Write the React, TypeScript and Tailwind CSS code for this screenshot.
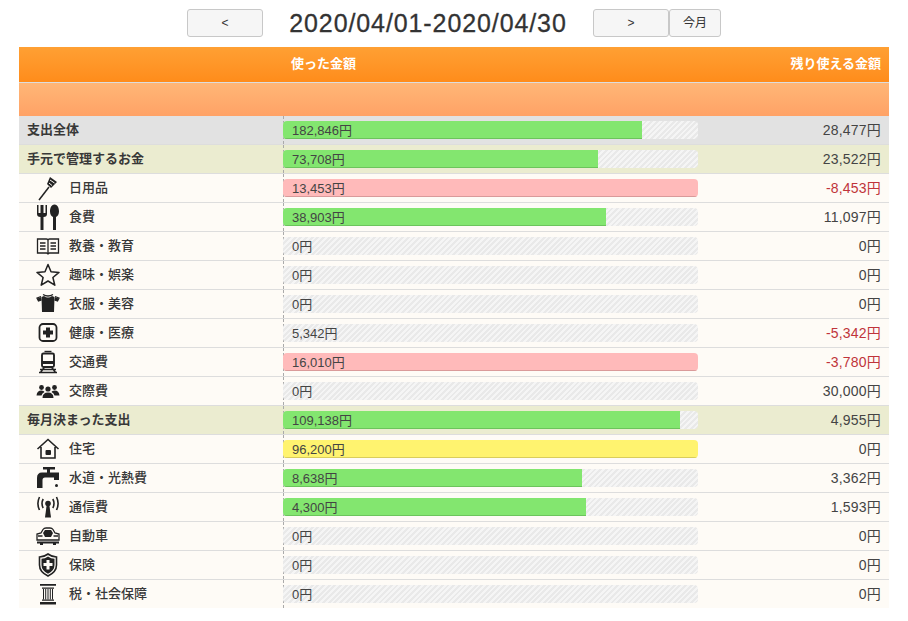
import React from "react";

type Row = {
  label: string;
  kind: "total" | "group" | "item";
  fill: number;
  color?: "green" | "pink" | "yellow";
  spent: string;
  left: string;
  red?: boolean;
  icon?: keyof typeof icons;
};

const icons = {
  brush: (
    <>
      <path d="M3 25 L13 12" stroke="currentColor" strokeWidth="1.500" fill="none" />
      <path d="M11 9 L14 2 L21 7 L15 13 Z" fill="currentColor" />
      <path d="M14 5 L18.500 8 M13 8 L16 10.500" stroke="#fefbf6" strokeWidth="1" fill="none" />
    </>
  ),
  food: (
    <>
      <path d="M1 1 V10 Q1 13 4.500 13 V26 H7.500 V13 Q11 13 11 10 V1 H9.500 V9 H7.500 V1 H4.500 V9 H2.500 V1 Z" fill="currentColor" />
      <path d="M18.500 0.500 C15 0.500 14 4.500 14 7.500 C14 10.500 15.500 12.500 17 13 V26 H20 V13 C21.500 12.500 23 10.500 23 7.500 C23 4.500 22 0.500 18.500 0.500 Z" fill="currentColor" />
    </>
  ),
  book: (
    <path
      d="M1.500 6 H10.500 Q12 6 12 7.500 Q12 6 13.500 6 H22.500 V20 H13.500 L12 21 L10.500 20 H1.500 Z M12 7.500 V21 M4 10 H9.500 M4 13 H9.500 M4 16 H9.500 M14.500 10 H20 M14.500 13 H20 M14.500 16 H20"
      stroke="currentColor"
      strokeWidth="1.300"
      fill="none"
    />
  ),
  star: (
    <path
      d="M12 2.500 L15 9.800 L23 10.400 L16.900 15.500 L18.800 23.200 L12 19 L5.200 23.200 L7.100 15.500 L1 10.400 L9 9.800 Z"
      stroke="currentColor"
      strokeWidth="1.500"
      fill="none"
      strokeLinejoin="round"
    />
  ),
  shirt: (
    <>
      <path d="M8 5 Q12 8 16 5 L18.500 6 L18 21 H6 L5.500 6 Z" fill="currentColor" />
      <path d="M7 3.500 Q12 6.500 17 3.500 M5 5.500 L1 7 L2.500 10 L5.500 9 M19 5.500 L23 7 L21.500 10 L18.500 9" stroke="currentColor" strokeWidth="1.300" fill="none" />
      <path d="M1.500 7.500 L5 6 L5.500 9 L2.500 10 Z M22.500 7.500 L19 6 L18.500 9 L21.500 10 Z" fill="currentColor" />
    </>
  ),
  health: (
    <>
      <rect x="3.500" y="4" width="17" height="17" rx="3.500" stroke="currentColor" strokeWidth="1.800" fill="none" />
      <path d="M10 7.500 H14 V10.500 H17 V14.500 H14 V17.500 H10 V14.500 H7 V10.500 H10 Z" fill="currentColor" />
    </>
  ),
  train: (
    <>
      <path d="M8.500 2.500 H15.500" stroke="currentColor" strokeWidth="1.400" />
      <rect x="6" y="4.500" width="12" height="13.500" rx="1.500" stroke="currentColor" strokeWidth="1.900" fill="none" />
      <path d="M6 12 H18 V15 H6 Z" fill="currentColor" />
      <path d="M8.500 18 L4.500 23.500 M15.500 18 L19.500 23.500 M4 20.500 H20 M3 23.500 H21" stroke="currentColor" strokeWidth="1.500" fill="none" />
    </>
  ),
  people: (
    <>
      <circle cx="5.500" cy="9.500" r="2.400" fill="currentColor" />
      <circle cx="18.500" cy="9.500" r="2.400" fill="currentColor" />
      <circle cx="12" cy="11" r="2.600" fill="currentColor" />
      <path d="M0.500 17.500 Q1 12.500 5.500 12.500 Q8 12.500 8.500 14 Q6 15 5.500 17.500 Z M23.500 17.500 Q23 12.500 18.500 12.500 Q16 12.500 15.500 14 Q18 15 18.500 17.500 Z M6.500 20 Q6.500 14.500 12 14.500 Q17.500 14.500 17.500 20 Z" fill="currentColor" />
    </>
  ),
  house: (
    <>
      <path d="M1.500 13 L12 3.500 L22.500 13 M5 11 V22 H19 V11" stroke="currentColor" strokeWidth="1.600" fill="none" />
      <rect x="9.500" y="14" width="5.500" height="5" rx="1" fill="currentColor" />
    </>
  ),
  faucet: (
    <>
      <path d="M7 2 H19 V4.500 H14 V7.500 H23 V15 H18 V12.500 H9 Q6.500 12.500 6.500 15 V23 H1 V13 Q1 7.500 6 7.500 H11 V4.500 H7 Z" fill="currentColor" />
      <circle cx="20.500" cy="20.500" r="1.500" fill="currentColor" />
    </>
  ),
  antenna: (
    <>
      <circle cx="12" cy="9.500" r="2.800" fill="currentColor" />
      <path d="M10.800 10 H13.200 L15 23.500 H9 Z" fill="currentColor" />
      <path d="M7.200 5 Q4.800 9.500 7.200 14 M16.800 5 Q19.200 9.500 16.800 14 M3.500 3 Q0.300 9.500 3.500 16 M20.500 3 Q23.700 9.500 20.500 16" stroke="currentColor" strokeWidth="1.600" fill="none" />
    </>
  ),
  car: (
    <>
      <path d="M5 10 L7 6.500 Q8 5 10 5 H14 Q16 5 17 6.500 L19 10 L23 11 V17 H1 V11 Z" stroke="currentColor" strokeWidth="1.300" fill="none" />
      <path d="M7 10 L9 7 H15 L17 10 L15 14 H9 Z" fill="currentColor" />
      <path d="M1 18.500 H23 V20.500 H20 V22 H17 V20.500 H7 V22 H4 V20.500 H1 Z" fill="currentColor" />
      <path d="M2 13 H6.500 M17.500 13 H22" stroke="currentColor" strokeWidth="1.300" />
    </>
  ),
  shield: (
    <>
      <path d="M12 2 Q16 5 20.500 5 V13 Q20.500 20 12 24 Q3.500 20 3.500 13 V5 Q8 5 12 2 Z" stroke="currentColor" strokeWidth="1.600" fill="none" />
      <path d="M12 4.500 Q15 6.800 18.500 6.800 V13 Q18.500 18.500 12 21.800 Q5.500 18.500 5.500 13 V6.800 Q9 6.800 12 4.500 Z" fill="currentColor" />
      <path d="M10.500 8 H13.500 V11 H16.500 V14 H13.500 V17.500 H10.500 V14 H7.500 V11 H10.500 Z" fill="#fefbf6" />
    </>
  ),
  bank: (
    <>
      <path d="M4 3 H20 V4.800 H4 Z M6 6.500 H18 V7.800 H6 Z M6 18.500 H18 V19.800 H6 Z M4 21 H20 V23.500 H4 Z" fill="currentColor" />
      <path d="M7.500 8 V18.500 M9.700 8 V18.500 M12 8 V18.500 M14.300 8 V18.500 M16.500 8 V18.500" stroke="currentColor" strokeWidth="1" />
    </>
  ),
};

const rows: Row[] = [
  { label: "支出全体", kind: "total", fill: 359, color: "green", spent: "182,846円", left: "28,477円" },
  { label: "手元で管理するお金", kind: "group", fill: 315, color: "green", spent: "73,708円", left: "23,522円" },
  { label: "日用品", kind: "item", icon: "brush", fill: 415, color: "pink", spent: "13,453円", left: "-8,453円", red: true },
  { label: "食費", kind: "item", icon: "food", fill: 323, color: "green", spent: "38,903円", left: "11,097円" },
  { label: "教養・教育", kind: "item", icon: "book", fill: 0, spent: "0円", left: "0円" },
  { label: "趣味・娯楽", kind: "item", icon: "star", fill: 0, spent: "0円", left: "0円" },
  { label: "衣服・美容", kind: "item", icon: "shirt", fill: 0, spent: "0円", left: "0円" },
  { label: "健康・医療", kind: "item", icon: "health", fill: 0, spent: "5,342円", left: "-5,342円", red: true },
  { label: "交通費", kind: "item", icon: "train", fill: 415, color: "pink", spent: "16,010円", left: "-3,780円", red: true },
  { label: "交際費", kind: "item", icon: "people", fill: 0, spent: "0円", left: "30,000円" },
  { label: "毎月決まった支出", kind: "group", fill: 397, color: "green", spent: "109,138円", left: "4,955円" },
  { label: "住宅", kind: "item", icon: "house", fill: 415, color: "yellow", spent: "96,200円", left: "0円" },
  { label: "水道・光熱費", kind: "item", icon: "faucet", fill: 299, color: "green", spent: "8,638円", left: "3,362円" },
  { label: "通信費", kind: "item", icon: "antenna", fill: 303, color: "green", spent: "4,300円", left: "1,593円" },
  { label: "自動車", kind: "item", icon: "car", fill: 0, spent: "0円", left: "0円" },
  { label: "保険", kind: "item", icon: "shield", fill: 0, spent: "0円", left: "0円" },
  { label: "税・社会保障", kind: "item", icon: "bank", fill: 0, spent: "0円", left: "0円" },
];

const rowBg = {
  total: "bg-[#e2e2e2]",
  group: "bg-[#ebecd0]",
  item: "bg-[#fefbf6]",
};

const fillColor = {
  green: "bg-[#83e66f] border-[#6cc45c]",
  pink: "bg-[#ffbaba] border-[#d99a9a]",
  yellow: "bg-[#fff36f] border-[#d9cd5c]",
};

const btn =
  "h-7 rounded-[3px] border border-[#c8c8c8] bg-[#f6f6f6] text-[12px] text-[#333] flex items-center justify-center";

const BudgetRow: React.FC<{ row: Row; last: boolean }> = ({ row, last }) => (
  <div
    className={`flex text-[#444] ${rowBg[row.kind]} ${
      last ? "h-[28px]" : "h-[29px] border-b border-[#dddddd]"
    }`}
  >
    <div className="w-[264px] flex items-center text-[13px] font-bold text-[#383838]">
      {row.icon ? (
        <>
          <svg viewBox="0 0 24 26" className="w-[24px] h-[26px] ml-[17px] mr-[9px] text-[#222]">
            {icons[row.icon]}
          </svg>
          <span className="font-medium">{row.label}</span>
        </>
      ) : (
        <span className="ml-2">{row.label}</span>
      )}
    </div>
    <div className="w-[415px] border-l border-dashed border-[#aaaaaa] flex items-center">
      <div className="relative w-[415px] h-[18px] -ml-px rounded-[4px] overflow-hidden text-[13px] bg-[repeating-linear-gradient(135deg,#e9e9e9_0,#e9e9e9_2px,#f5f5f5_2px,#f5f5f5_4px)]">
        {row.color && (
          <div className={`h-full border-b ${fillColor[row.color]}`} style={{ width: row.fill }} />
        )}
        <span className="absolute left-[9px] top-0 leading-[19px]">{row.spent}</span>
      </div>
    </div>
    <div
      className={`flex-1 flex items-center justify-end pr-2 text-[14px] tracking-[0.200px] ${
        row.red ? "text-[#c0343a]" : ""
      }`}
    >
      {row.left}
    </div>
  </div>
);

const App: React.FC = () => {
  return (
    <div className="min-h-[621px] bg-white px-[19px] [font-family:'Liberation_Sans','Noto_Sans_CJK_JP',sans-serif]">
      <div className="h-[47px] pt-[9px] flex justify-center items-start">
        <button className={`${btn} w-[76px]`}>&lt;</button>
        <div className="w-[330px] h-7 text-center text-[25px] leading-7 tracking-[0.900px] text-[#333] [-webkit-text-stroke:0.3px_#333]">
          2020/04/01-2020/04/30
        </div>
        <button className={`${btn} w-[76px]`}>&gt;</button>
        <button className={`${btn} w-[52px]`}>今月</button>
      </div>
      <div className="h-[36px] pb-[2px] border-b border-[#dddddd] bg-gradient-to-b from-[#ffa033] to-[#ff8c1a] flex items-center text-[13px] font-bold text-white">
        <div className="w-[272px]" />
        <div className="flex-1">使った金額</div>
        <div className="pr-2">残り使える金額</div>
      </div>
      <div className="h-[33px] bg-gradient-to-b from-[#ffb676] to-[#ffa266]" />
      {rows.map((row, i) => (
        <BudgetRow key={row.label} row={row} last={i === rows.length - 1} />
      ))}
    </div>
  );
};

export default App;
